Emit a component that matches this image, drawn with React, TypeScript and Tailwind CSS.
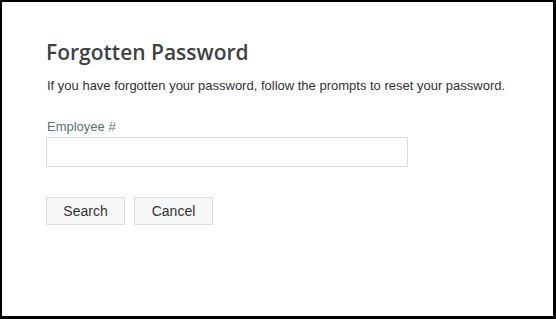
import React from "react";

export default function App() {
  return (
    <div className="w-[556px] h-[319px] bg-white border-2 border-b-[3px] border-r-[3px] border-black box-border" style={{ fontFamily: '"Liberation Sans", Arial, sans-serif' }}>
      <div className="pl-[44px] pt-[36px]">
        <h1 className="text-[21px] leading-[28px] font-semibold text-[#3d4246]" style={{ fontFamily: '"Open Sans", sans-serif' }}>
          Forgotten Password
        </h1>
        <p className="mt-[12px] text-[13px] leading-[16px] text-[#333333] pl-px">
          If you have forgotten your password, follow the prompts to reset your password.
        </p>
        <label className="block mt-[25px] text-[13px] leading-[16px] text-[#5f7177] pl-px">Employee #</label>
        <input className="block mt-[2px] w-[362px] h-[30px] border border-[#dcdcdc] bg-white outline-none" />
        <div className="mt-[30px] flex gap-[9px]">
          <button className="w-[79px] h-[28px] bg-[#f6f7f8] border border-[#dcdcdc] text-[14px] text-[#333333]">Search</button>
          <button className="w-[79px] h-[28px] bg-[#f6f7f8] border border-[#dcdcdc] text-[14px] text-[#333333]">Cancel</button>
        </div>
      </div>
    </div>
  );
}
